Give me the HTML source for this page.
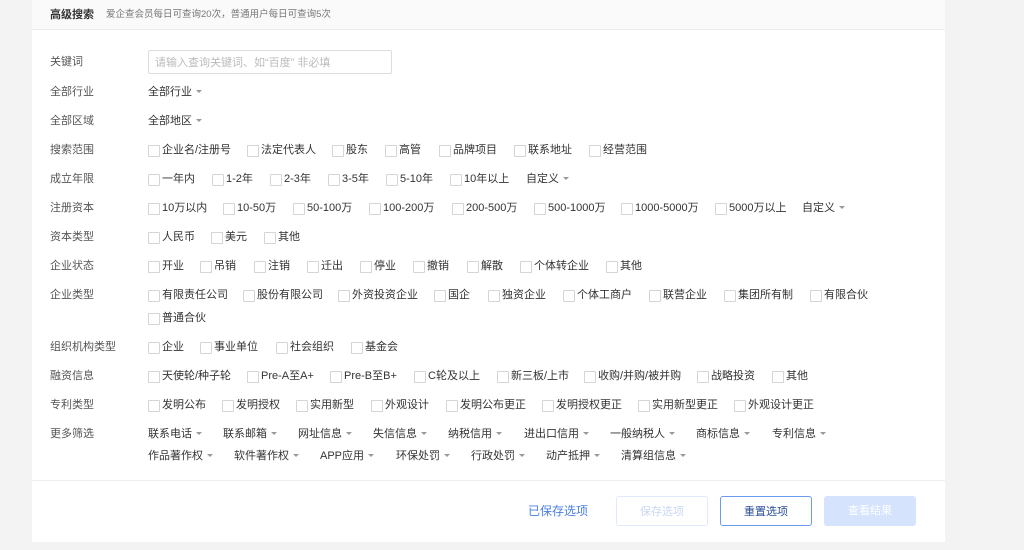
<!DOCTYPE html>
<html><head><meta charset="utf-8"><style>
*{margin:0;padding:0;box-sizing:border-box}
body{width:1024px;height:550px;background:#f3f3f3;font-family:"Liberation Sans","Noto Sans CJK SC",sans-serif;font-size:11px;color:#333;position:relative;overflow:hidden}
.card{position:absolute;left:32px;top:0;width:913px;height:542px;background:#fff}
.hd{position:absolute;left:32px;top:0;width:913px;height:30px;background:#fafafa;border-bottom:1px solid #eee}
.t{position:absolute;white-space:nowrap;line-height:14px}
.l{color:#555}
.c{position:absolute;white-space:nowrap;line-height:14px;padding-left:14px;color:#333}
.c:before{content:"";position:absolute;left:0;top:2px;width:10px;height:10px;border:1px solid #d5d5d5;border-radius:1px;background:#fff}
.d{position:absolute;white-space:nowrap;line-height:14px;color:#333}
.d:after{content:"";display:inline-block;margin-left:4px;vertical-align:2px;border-left:3px solid transparent;border-right:3px solid transparent;border-top:3px solid #999}
.btn{position:absolute;top:496px;width:92px;height:30px;border-radius:3px;text-align:center;line-height:30px;font-size:11px}
</style></head><body>
<div class="card"></div>
<div class="hd"></div>
<div class="t" style="left:50px;top:8px;font-weight:bold;color:#333">高级搜索</div>
<div class="t" style="left:106px;top:8px;font-size:9.5px;color:#777">爱企查会员每日可查询20次，普通用户每日可查询5次</div>
<div style="position:absolute;left:32px;top:480px;width:913px;height:1px;background:#eee"></div>

<div class="t l" style="left:50px;top:55px">关键词</div>
<div style="position:absolute;left:148px;top:50px;width:244px;height:24px;border:1px solid #ddd;border-radius:2px"></div>
<div class="t" style="left:155px;top:56px;color:#bbb">请输入查询关键词、如“百度” 非必填</div>

<div class="t l" style="left:50px;top:85px">全部行业</div><div class="d" style="left:148px;top:85px">全部行业</div>
<div class="t l" style="left:50px;top:114px">全部区域</div><div class="d" style="left:148px;top:114px">全部地区</div>

<div class="t l" style="left:50px;top:143px">搜索范围</div>
<div class="c" style="left:148px;top:143px">企业名/注册号</div><div class="c" style="left:247px;top:143px">法定代表人</div><div class="c" style="left:332px;top:143px">股东</div><div class="c" style="left:385px;top:143px">高管</div><div class="c" style="left:439px;top:143px">品牌项目</div><div class="c" style="left:514px;top:143px">联系地址</div><div class="c" style="left:589px;top:143px">经营范围</div>

<div class="t l" style="left:50px;top:172px">成立年限</div>
<div class="c" style="left:148px;top:172px">一年内</div><div class="c" style="left:212px;top:172px">1-2年</div><div class="c" style="left:270px;top:172px">2-3年</div><div class="c" style="left:328px;top:172px">3-5年</div><div class="c" style="left:386px;top:172px">5-10年</div><div class="c" style="left:450px;top:172px">10年以上</div><div class="d" style="left:526px;top:172px">自定义</div>

<div class="t l" style="left:50px;top:201px">注册资本</div>
<div class="c" style="left:148px;top:201px">10万以内</div><div class="c" style="left:223px;top:201px">10-50万</div><div class="c" style="left:293px;top:201px">50-100万</div><div class="c" style="left:369px;top:201px">100-200万</div><div class="c" style="left:452px;top:201px">200-500万</div><div class="c" style="left:534px;top:201px">500-1000万</div><div class="c" style="left:621px;top:201px">1000-5000万</div><div class="c" style="left:715px;top:201px">5000万以上</div><div class="d" style="left:802px;top:201px">自定义</div>

<div class="t l" style="left:50px;top:230px">资本类型</div>
<div class="c" style="left:148px;top:230px">人民币</div><div class="c" style="left:211px;top:230px">美元</div><div class="c" style="left:264px;top:230px">其他</div>

<div class="t l" style="left:50px;top:259px">企业状态</div>
<div class="c" style="left:148px;top:259px">开业</div><div class="c" style="left:200px;top:259px">吊销</div><div class="c" style="left:254px;top:259px">注销</div><div class="c" style="left:307px;top:259px">迁出</div><div class="c" style="left:360px;top:259px">停业</div><div class="c" style="left:413px;top:259px">撤销</div><div class="c" style="left:467px;top:259px">解散</div><div class="c" style="left:520px;top:259px">个体转企业</div><div class="c" style="left:606px;top:259px">其他</div>

<div class="t l" style="left:50px;top:288px">企业类型</div>
<div class="c" style="left:148px;top:288px">有限责任公司</div><div class="c" style="left:243px;top:288px">股份有限公司</div><div class="c" style="left:338px;top:288px">外资投资企业</div><div class="c" style="left:434px;top:288px">国企</div><div class="c" style="left:488px;top:288px">独资企业</div><div class="c" style="left:563px;top:288px">个体工商户</div><div class="c" style="left:649px;top:288px">联营企业</div><div class="c" style="left:724px;top:288px">集团所有制</div><div class="c" style="left:810px;top:288px">有限合伙</div>
<div class="c" style="left:148px;top:311px">普通合伙</div>

<div class="t l" style="left:50px;top:340px">组织机构类型</div>
<div class="c" style="left:148px;top:340px">企业</div><div class="c" style="left:200px;top:340px">事业单位</div><div class="c" style="left:276px;top:340px">社会组织</div><div class="c" style="left:351px;top:340px">基金会</div>

<div class="t l" style="left:50px;top:369px">融资信息</div>
<div class="c" style="left:148px;top:369px">天使轮/种子轮</div><div class="c" style="left:247px;top:369px">Pre-A至A+</div><div class="c" style="left:330px;top:369px">Pre-B至B+</div><div class="c" style="left:414px;top:369px">C轮及以上</div><div class="c" style="left:497px;top:369px">新三板/上市</div><div class="c" style="left:584px;top:369px">收购/并购/被并购</div><div class="c" style="left:697px;top:369px">战略投资</div><div class="c" style="left:772px;top:369px">其他</div>

<div class="t l" style="left:50px;top:398px">专利类型</div>
<div class="c" style="left:148px;top:398px">发明公布</div><div class="c" style="left:222px;top:398px">发明授权</div><div class="c" style="left:296px;top:398px">实用新型</div><div class="c" style="left:371px;top:398px">外观设计</div><div class="c" style="left:446px;top:398px">发明公布更正</div><div class="c" style="left:542px;top:398px">发明授权更正</div><div class="c" style="left:638px;top:398px">实用新型更正</div><div class="c" style="left:734px;top:398px">外观设计更正</div>

<div class="t l" style="left:50px;top:427px">更多筛选</div>
<div class="d" style="left:148px;top:427px">联系电话</div><div class="d" style="left:223px;top:427px">联系邮箱</div><div class="d" style="left:298px;top:427px">网址信息</div><div class="d" style="left:373px;top:427px">失信信息</div><div class="d" style="left:448px;top:427px">纳税信用</div><div class="d" style="left:524px;top:427px">进出口信用</div><div class="d" style="left:610px;top:427px">一般纳税人</div><div class="d" style="left:696px;top:427px">商标信息</div><div class="d" style="left:772px;top:427px">专利信息</div>
<div class="d" style="left:148px;top:449px">作品著作权</div><div class="d" style="left:234px;top:449px">软件著作权</div><div class="d" style="left:320px;top:449px">APP应用</div><div class="d" style="left:396px;top:449px">环保处罚</div><div class="d" style="left:471px;top:449px">行政处罚</div><div class="d" style="left:546px;top:449px">动产抵押</div><div class="d" style="left:621px;top:449px">清算组信息</div>

<div class="t" style="left:528px;top:504px;color:#4a7fe0;font-size:12px">已保存选项</div>
<div class="btn" style="left:616px;border:1px solid #e1eafb;color:#c9d7f3">保存选项</div>
<div class="btn" style="left:720px;border:1px solid #6b9af0;color:#2a4f9a">重置选项</div>
<div class="btn" style="left:824px;background:#d5e3fc;color:#fff">查看结果</div>
</body></html>
